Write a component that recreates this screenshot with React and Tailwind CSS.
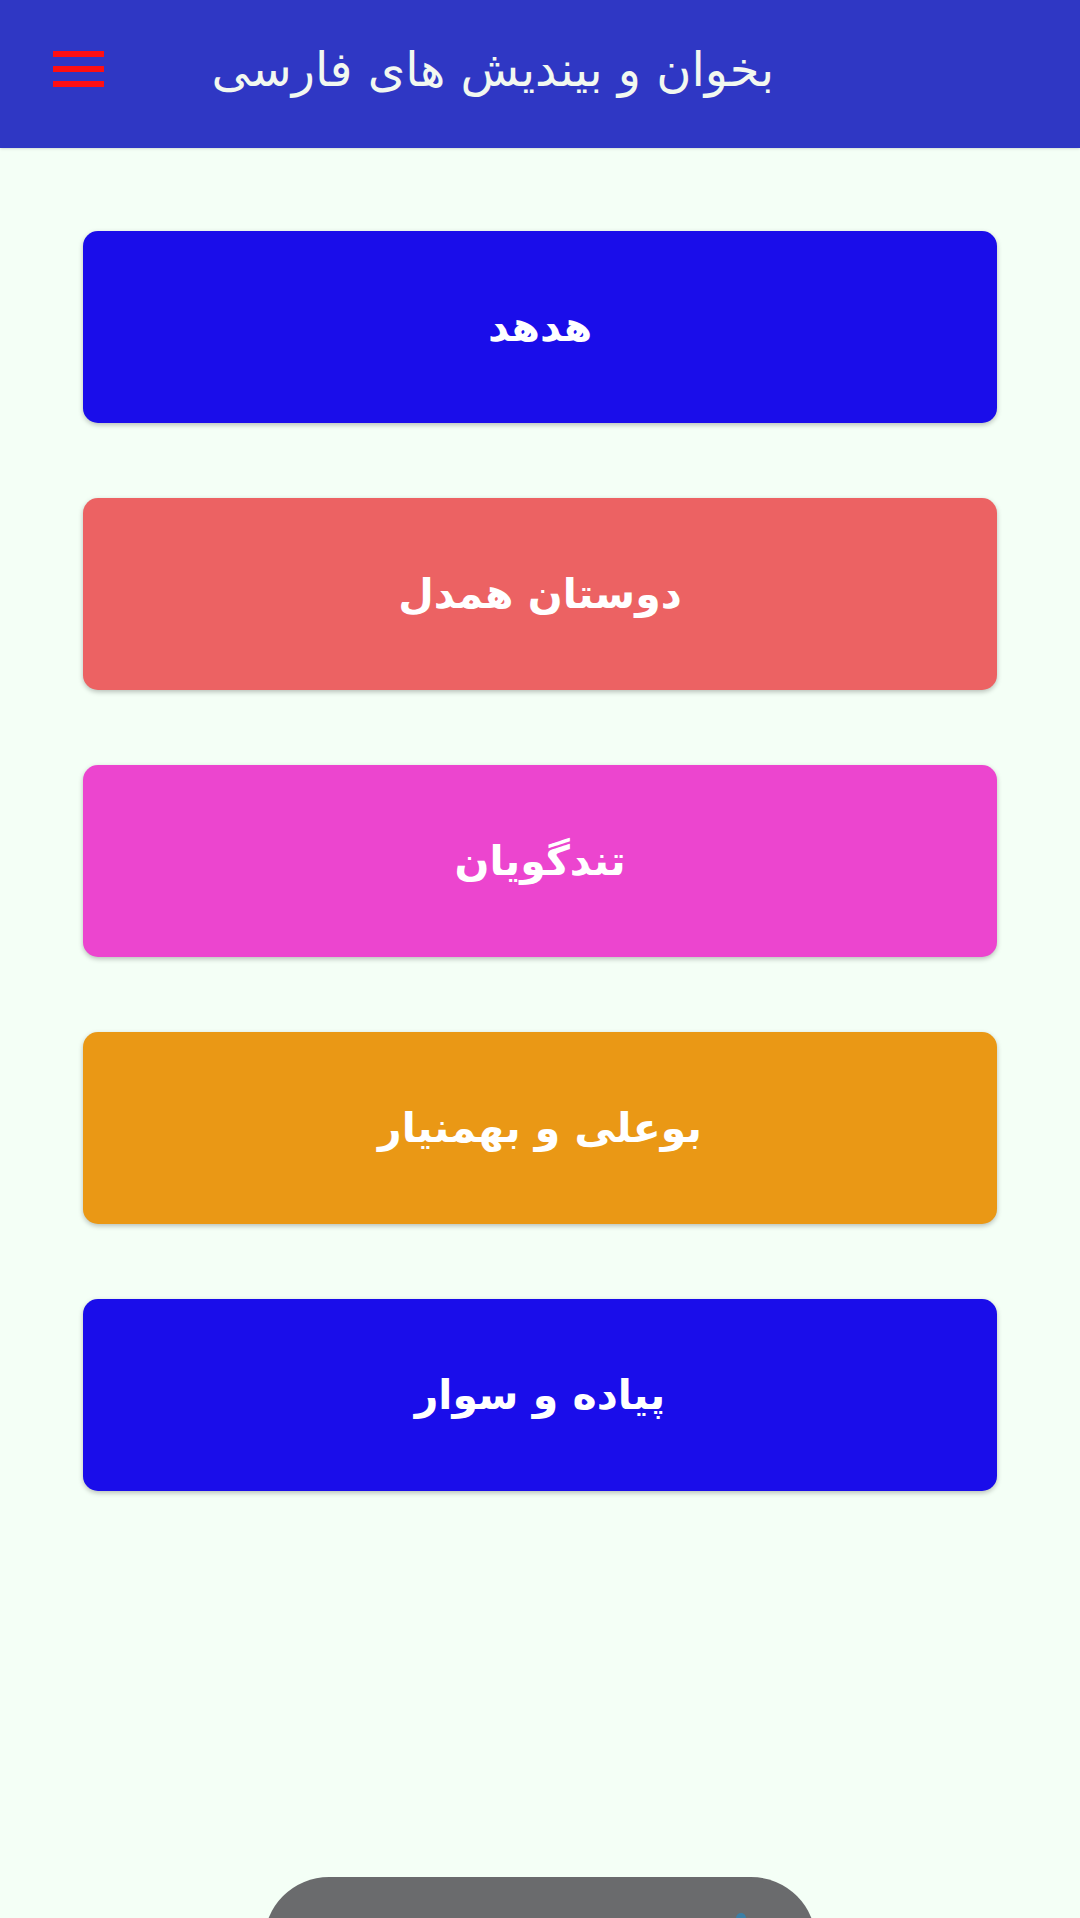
import React from "react";

const items = [
  { title: "هدهد", color: "bg-[#1a0dea]" },
  { title: "دوستان همدل", color: "bg-[#ec6263]" },
  { title: "تندگویان", color: "bg-[#ec45cf]" },
  { title: "بوعلی و بهمنیار", color: "bg-[#ea9815]" },
  { title: "پیاده و سوار", color: "bg-[#1a0dea]" },
];

const faFont = { fontFamily: '"DejaVu Sans", "Noto Sans", sans-serif' };

export default function App() {
  return (
    <div className="relative w-[1080px] h-[1918px] overflow-hidden bg-[#f4fff6]" style={faFont}>
      {/* App bar */}
      <header className="h-[148px] bg-[#2f37c4] flex items-center shadow-sm">
        <button className="ml-[53px] mt-[-10px] w-[51px] flex flex-col gap-[9px]">
          <span className="block h-[6px] bg-[#ff0f12]" />
          <span className="block h-[6px] bg-[#ff0f12]" />
          <span className="block h-[6px] bg-[#ff0f12]" />
        </button>
        <div className="ml-[100px] mt-[-10px] w-[570px] text-right">
          <h1 dir="rtl" className="text-[48px] text-[#f2f8f0] leading-none whitespace-nowrap">
            بخوان و بیندیش های فارسی
          </h1>
        </div>
      </header>

      {/* Story list */}
      <main className="px-[83px] pt-[83px] flex flex-col gap-[75px]">
        {items.map((it, i) => (
          <button
            key={`story-${i}`}
            className={`${it.color} h-[192px] rounded-[15px] shadow-[0_2px_5px_rgba(0,0,0,0.25)] flex items-center justify-center`}
          >
            <span dir="rtl" className="text-white font-bold text-[41px] leading-none">
              {it.title}
            </span>
          </button>
        ))}
      </main>

      {/* Toast peeking from the bottom */}
      <div className="absolute left-[264px] top-[1877px] w-[552px] h-[130px] rounded-[70px] bg-[#6a6b6d]">
        <span className="absolute right-[70px] top-[36px] w-[10px] h-[10px] rounded-full bg-[#3b7fa6]" />
      </div>
    </div>
  );
}
